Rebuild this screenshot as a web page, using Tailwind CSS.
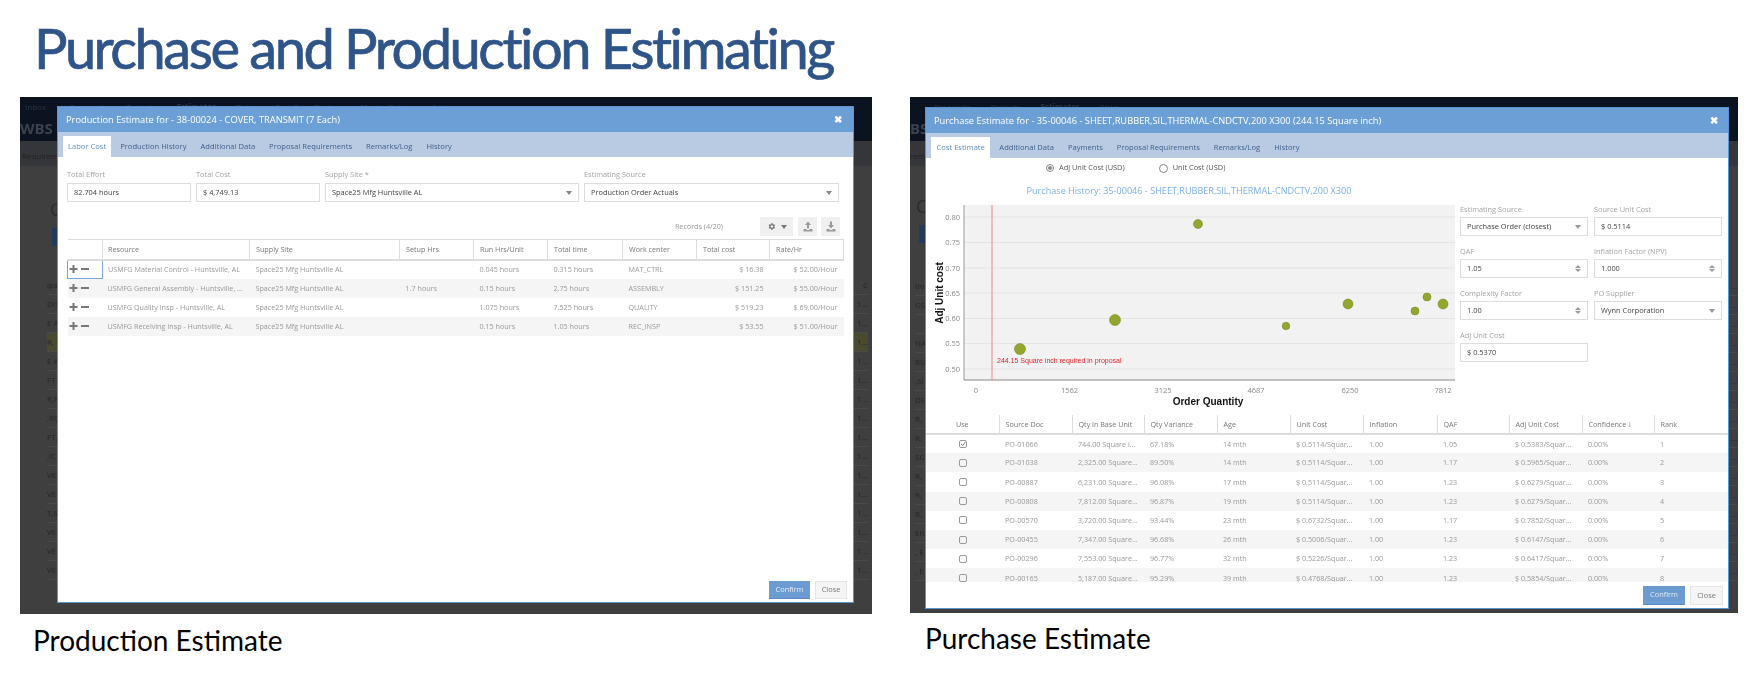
<!DOCTYPE html>
<html lang="en">
<head>
<meta charset="UTF-8" />
<title>Purchase and Production Estimating</title>
<script src="https://cdn.jsdelivr.net/npm/@tailwindcss/browser@4"></script>
</head>
<body class="bg-white font-['Open_Sans',sans-serif] overflow-hidden">
<div class="w-[1762px] h-[678px] overflow-hidden">

  <h1 class="h-[97px] pl-[34px] pt-[13px] font-['Lato',sans-serif] text-[56px] leading-[70px] text-[#2f5488] tracking-[-2.5px] [-webkit-text-stroke:0.7px_#2f5488]">Purchase and Production Estimating</h1>

  <div class="flex pl-[20px] gap-[38px]">

    <!-- Production estimate -->
    <div class="w-[852px]">
      <div class="relative h-[517px] bg-[#3f3f3f] overflow-hidden blur-[0.4px]">
        <div class="h-[44px] bg-[#0b1320] text-[#2a3444]">
          <div class="flex gap-[20px] pl-[5px] pt-[5px] text-[8px] leading-[10px]"><span>Inbox</span><span class="ml-[4px]">Proposals</span><span>Projects</span><span class="font-bold">Estimates</span><span>Risks</span><span>Cost-Price Review</span><span>Master Data ▾</span><span>Setup ▾</span></div>
          <div class="pl-0 pt-[7px] text-[15px] leading-[18px] font-bold text-[#3a4250]">WBS</div>
        </div>
        <div class="h-[25px] bg-[#35363a] pl-[2px] pt-[10px] text-[8px] leading-[10px] text-[#222]">Requirements</div>
        <div class="pl-[30px] pt-[33px] text-[18px] leading-[20px] text-[#2c2c2c]">C</div>
        <div class="ml-[32px] mt-[9px] w-[10px] h-[18px] bg-[#233a58]"></div>
        <div id="bgLeft" class="mt-[30px] pl-[27px] pr-[4px] text-[8px] text-[#262626]"></div>

        <div class="absolute left-[37px] top-[9px] w-[797px] h-[497px] bg-white border border-[#5b93d3] flex flex-col">
          <div class="h-[25px] shrink-0 bg-[#6c9fd6] flex items-center justify-between pl-[8px] pr-[11px] text-[9.3px] text-white">
            <span>Production Estimate for - 38-00024 - COVER, TRANSMIT (7 Each)</span>
            <span class="font-bold text-[10px]">✖</span>
          </div>
          <div class="h-[25px] shrink-0 bg-[#b9cbe3] flex items-end pl-[5px] gap-[4px] text-[7.6px] text-[#3f5f8c]">
            <span class="h-[21px] px-[5px] bg-white text-[#5f8fc6] flex items-center">Labor Cost</span>
            <span class="h-[21px] px-[5px] flex items-center">Production History</span>
            <span class="h-[21px] px-[5px] flex items-center">Additional Data</span>
            <span class="h-[21px] px-[5px] flex items-center">Proposal Requirements</span>
            <span class="h-[21px] px-[5px] flex items-center">Remarks/Log</span>
            <span class="h-[21px] px-[5px] flex items-center">History</span>
          </div>

          <div class="flex-1 pl-[9px] pr-[10px] pt-[11px] flex flex-col">
            <div class="flex gap-[5px] text-[7.4px]">
              <div class="w-[124px]"><div class="h-[15px] text-[#a3a3a3] leading-[13px]">Total Effort</div><div class="h-[19px] border border-[#ddd] px-[6px] flex items-center text-[#444]">82.704 hours</div></div>
              <div class="w-[124px]"><div class="h-[15px] text-[#a3a3a3] leading-[13px]">Total Cost</div><div class="h-[19px] border border-[#ddd] px-[6px] flex items-center text-[#444]">$ 4,749.13</div></div>
              <div class="w-[254px]"><div class="h-[15px] text-[#a3a3a3] leading-[13px]">Supply Site *</div><div class="h-[19px] border border-[#ddd] px-[6px] flex items-center justify-between text-[#444]"><span>Space25 Mfg Huntsville AL</span><span class="border-x-[3px] border-x-transparent border-t-[4px] border-t-[#888]"></span></div></div>
              <div class="w-[255px]"><div class="h-[15px] text-[#a3a3a3] leading-[13px]">Estimating Source</div><div class="h-[19px] border border-[#ddd] px-[6px] flex items-center justify-between text-[#444]"><span>Production Order Actuals</span><span class="border-x-[3px] border-x-transparent border-t-[4px] border-t-[#888]"></span></div></div>
            </div>

            <div class="mt-[15px] h-[19px] flex items-center justify-end pr-[3px] text-[7.2px] text-[#999]">
              <span class="mr-[37px]">Records (4/20)</span>
              <span class="w-[33px] h-[19px] bg-[#f0f0f0] flex items-center justify-center gap-[5px]">
                <svg width="9" height="9" viewBox="0 0 24 24" fill="#777"><path d="M19.4 13a7.5 7.5 0 0 0 0-2l2.1-1.6-2-3.5-2.5 1a7.5 7.5 0 0 0-1.7-1L15 3.200h-4l-.4 2.700a7.500 7.500 0 0 0-1.700 1l-2.500-1-2 3.500L6.500 11a7.500 7.500 0 0 0 0 2l-2.100 1.600 2 3.500 2.500-1a7.500 7.500 0 0 0 1.700 1l.4 2.700h4l.4-2.700a7.500 7.500 0 0 0 1.700-1l2.500 1 2-3.500zM13 15.500a3.500 3.500 0 1 1 0-7 3.500 3.500 0 0 1 0 7z"/></svg>
                <span class="border-x-[3px] border-x-transparent border-t-[4px] border-t-[#777]"></span>
              </span>
              <span class="ml-[5px] w-[19px] h-[19px] bg-[#f0f0f0] flex items-center justify-center">
                <svg width="10" height="11" viewBox="0 0 20 22" fill="#999"><path d="M10 1l6 7h-4v7H8V8H4z"/><path d="M1 16h6v2h6v-2h6v5H1z"/></svg>
              </span>
              <span class="ml-[4px] w-[19px] h-[19px] bg-[#f0f0f0] flex items-center justify-center">
                <svg width="10" height="11" viewBox="0 0 20 22" fill="#999"><path d="M8 1h4v7h4l-6 7-6-7h4z"/><path d="M1 16h6v2h6v-2h6v5H1z"/></svg>
              </span>
            </div>

            <table class="mt-[3px] w-[776px] table-fixed text-[7.2px]">
              <colgroup><col class="w-[35px]"><col class="w-[147px]"><col class="w-[150px]"><col class="w-[74px]"><col class="w-[74px]"><col class="w-[75px]"><col class="w-[74px]"><col class="w-[73px]"><col class="w-[74px]"></colgroup>
              <thead class="text-[#777] text-left">
                <tr class="h-[20px] border-t border-b-2 border-[#ddd]">
                  <th class="font-normal px-[6px]"></th>
                  <th class="font-normal px-[5px] border-l border-[#ddd]">Resource</th>
                  <th class="font-normal px-[6px] border-l border-[#ddd]">Supply Site</th>
                  <th class="font-normal px-[6px] border-l border-[#ddd]">Setup Hrs</th>
                  <th class="font-normal px-[6px] border-l border-[#ddd]">Run Hrs/Unit</th>
                  <th class="font-normal px-[6px] border-l border-[#ddd]">Total time</th>
                  <th class="font-normal px-[6px] border-l border-[#ddd]">Work center</th>
                  <th class="font-normal px-[6px] border-l border-[#ddd]">Total cost</th>
                  <th class="font-normal px-[6px] border-x border-[#ddd]">Rate/Hr</th>
                </tr>
              </thead>
              <tbody id="labor" class="text-[#999]"></tbody>
            </table>

            <div class="mt-auto mb-[3px] mr-[-4px] flex justify-end gap-[5px] text-[7.4px]">
              <span class="w-[41px] h-[18px] bg-[#6b9bd0] border-b border-[#5b8cc5] text-[#e8f0fa] flex items-center justify-center">Confirm</span>
              <span class="w-[32px] h-[18px] bg-[#f5f5f5] border border-[#e5e5e5] text-[#777] flex items-center justify-center">Close</span>
            </div>
          </div>
        </div>
      </div>
      <p class="mt-[9px] pl-[13px] font-['Lato',sans-serif] text-[28px] leading-[34px] text-black">Production Estimate</p>
    </div>

    <!-- Purchase estimate -->
    <div class="w-[828px]">
      <div class="relative h-[516px] bg-[#3f3f3f] overflow-hidden blur-[0.4px]">
        <div class="h-[44px] bg-[#0b1320] text-[#2a3444] overflow-hidden">
          <div class="flex gap-[20px] pl-[24px] pt-[5px] text-[8px] leading-[10px]"><span>Proposals</span><span>Projects</span><span class="font-bold">Estimates</span><span>Risks</span></div>
          <div class="pt-[7px] text-[15px] leading-[18px] font-bold text-[#3a4250]">BS</div>
        </div>
        <div class="h-[25px] bg-[#35363a] pt-[10px] text-[8px] leading-[10px] text-[#222]">rem</div>
        <div class="pl-[6px] pt-[30px] text-[18px] leading-[20px] text-[#2c2c2c]">C</div>
        <div class="ml-[9px] mt-[9px] w-[8px] h-[18px] bg-[#233a58]"></div>
        <div id="bgRight" class="mt-[34px] pl-[5px] pr-[1px] text-[8px] text-[#262626]"></div>

        <div class="absolute left-[15px] top-[10px] w-[804px] h-[502px] bg-white border border-[#5b93d3] flex flex-col">
          <div class="h-[25px] shrink-0 bg-[#6c9fd6] flex items-center justify-between pl-[8px] pr-[10px] text-[9.3px] text-white">
            <span>Purchase Estimate for - 35-00046 - SHEET,RUBBER,SIL,THERMAL-CNDCTV,200 X300 (244.15 Square inch)</span>
            <span class="font-bold text-[10px]">✖</span>
          </div>
          <div class="h-[25px] shrink-0 bg-[#b9cbe3] flex items-end pl-[5px] gap-[4px] text-[7.6px] text-[#3f5f8c]">
            <span class="h-[21px] px-[5.500px] bg-white text-[#5f8fc6] flex items-center">Cost Estimate</span>
            <span class="h-[21px] px-[5px] flex items-center">Additional Data</span>
            <span class="h-[21px] px-[5px] flex items-center">Payments</span>
            <span class="h-[21px] px-[5px] flex items-center">Proposal Requirements</span>
            <span class="h-[21px] px-[5px] flex items-center">Remarks/Log</span>
            <span class="h-[21px] px-[5px] flex items-center">History</span>
          </div>

          <div class="h-[20px] mb-[2px] shrink-0 flex items-center pl-[120px] text-[7.4px] text-[#555]">
            <span class="w-[8px] h-[8px] rounded-full border border-[#888] flex items-center justify-center"><span class="w-[4px] h-[4px] rounded-full bg-[#888]"></span></span>
            <span class="ml-[5px]">Adj Unit Cost (USD)</span>
            <span class="ml-[34px] w-[9px] h-[9px] rounded-full border border-[#888]"></span>
            <span class="ml-[5px]">Unit Cost (USD)</span>
          </div>

          <div class="flex shrink-0">
            <svg class="block" width="534" height="232" viewBox="0 0 534 232">
              <text x="263" y="14" text-anchor="middle" font-size="9.100" fill="#7cb0e8" font-family="Open Sans">Purchase History: 35-00046 - SHEET,RUBBER,SIL,THERMAL-CNDCTV,200 X300</text>
              <rect x="38" y="25" width="491" height="175" fill="#f2f2f2" />
              <g stroke="#e4e4e4" stroke-width="1">
                <line x1="38" x2="529" y1="37" y2="37" /><line x1="38" x2="529" y1="62.500" y2="62.500" /><line x1="38" x2="529" y1="88" y2="88" /><line x1="38" x2="529" y1="113" y2="113" /><line x1="38" x2="529" y1="138.500" y2="138.500" /><line x1="38" x2="529" y1="163.500" y2="163.500" /><line x1="38" x2="529" y1="189" y2="189" />
              </g>
              <line x1="38" x2="38" y1="25" y2="200" stroke="#999" />
              <line x1="38" x2="529" y1="200" y2="200" stroke="#888" />
              <line x1="66" x2="66" y1="25" y2="200" stroke="#e88" stroke-width="1" />
              <text x="71" y="183" font-size="7" fill="#e8202a" font-family="Liberation Sans">244.15 Square inch required in proposal</text>
              <g font-size="7.500" fill="#888" font-family="Open Sans" text-anchor="end">
                <text x="34" y="40">0.80</text><text x="34" y="65">0.75</text><text x="34" y="91">0.70</text><text x="34" y="116">0.65</text><text x="34" y="141">0.60</text><text x="34" y="166">0.55</text><text x="34" y="192">0.50</text>
              </g>
              <g font-size="7.500" fill="#888" font-family="Open Sans" text-anchor="middle">
                <text x="50" y="213">0</text><text x="143.500" y="213">1562</text><text x="237" y="213">3125</text><text x="330" y="213">4687</text><text x="424" y="213">6250</text><text x="517" y="213">7812</text>
              </g>
              <text x="17" y="113" transform="rotate(-90 17 113)" text-anchor="middle" font-size="10" font-weight="700" fill="#111" font-family="Liberation Sans">Adj Unit cost</text>
              <text x="282" y="225" text-anchor="middle" font-size="10" font-weight="700" fill="#111" font-family="Liberation Sans">Order Quantity</text>
              <g fill="#95a62c" stroke="#6f7d1f" stroke-width="0.500">
                <circle cx="272" cy="44" r="4.500" /><circle cx="189" cy="140" r="5.500" /><circle cx="94" cy="169" r="5.500" /><circle cx="360" cy="146" r="3.800" /><circle cx="422" cy="124" r="5" /><circle cx="489" cy="131" r="4" /><circle cx="501" cy="117" r="4" /><circle cx="517" cy="124" r="5" />
              </g>
            </svg>

            <div class="mt-[23px] grid grid-cols-[128px_128px] gap-x-[6px] gap-y-[9px] content-start text-[7.4px]">
              <div><div class="h-[14px] text-[#a3a3a3] leading-[12px]">Estimating Source</div><div class="h-[19px] border border-[#ddd] px-[6px] flex items-center justify-between text-[#444]"><span>Purchase Order (closest)</span><span class="border-x-[3px] border-x-transparent border-t-[4px] border-t-[#999]"></span></div></div>
              <div><div class="h-[14px] text-[#a3a3a3] leading-[12px]">Source Unit Cost</div><div class="h-[19px] border border-[#ddd] px-[6px] flex items-center text-[#444]">$ 0.5114</div></div>
              <div><div class="h-[14px] text-[#a3a3a3] leading-[12px]">QAF</div><div class="h-[19px] border border-[#ddd] px-[6px] flex items-center justify-between text-[#444]"><span>1.05</span><span class="flex flex-col gap-[1px]"><span class="border-x-[3px] border-x-transparent border-b-[3px] border-b-[#999]"></span><span class="border-x-[3px] border-x-transparent border-t-[3px] border-t-[#999]"></span></span></div></div>
              <div><div class="h-[14px] text-[#a3a3a3] leading-[12px]">Inflation Factor (NPV)</div><div class="h-[19px] border border-[#ddd] px-[6px] flex items-center justify-between text-[#444]"><span>1.000</span><span class="flex flex-col gap-[1px]"><span class="border-x-[3px] border-x-transparent border-b-[3px] border-b-[#999]"></span><span class="border-x-[3px] border-x-transparent border-t-[3px] border-t-[#999]"></span></span></div></div>
              <div><div class="h-[14px] text-[#a3a3a3] leading-[12px]">Complexity Factor</div><div class="h-[19px] border border-[#ddd] px-[6px] flex items-center justify-between text-[#444]"><span>1.00</span><span class="flex flex-col gap-[1px]"><span class="border-x-[3px] border-x-transparent border-b-[3px] border-b-[#999]"></span><span class="border-x-[3px] border-x-transparent border-t-[3px] border-t-[#999]"></span></span></div></div>
              <div><div class="h-[14px] text-[#a3a3a3] leading-[12px]">PO Supplier</div><div class="h-[19px] border border-[#ddd] px-[6px] flex items-center justify-between text-[#444]"><span>Wynn Corporation</span><span class="border-x-[3px] border-x-transparent border-t-[4px] border-t-[#999]"></span></div></div>
              <div><div class="h-[14px] text-[#a3a3a3] leading-[12px]">Adj Unit Cost</div><div class="h-[19px] border border-[#ddd] px-[6px] flex items-center text-[#444]">$ 0.5370</div></div>
            </div>
          </div>

          <div class="mt-[3px] h-[167px] shrink-0 overflow-hidden">
            <table class="w-[802px] table-fixed text-[7.2px]">
              <colgroup><col class="w-[73px]"><col class="w-[73px]"><col class="w-[72px]"><col class="w-[73px]"><col class="w-[73px]"><col class="w-[73px]"><col class="w-[74px]"><col class="w-[72px]"><col class="w-[73px]"><col class="w-[72px]"><col class="w-[74px]"></colgroup>
              <thead class="text-[#777] text-left">
                <tr class="h-[19px] border-b-2 border-[#ddd]">
                  <th class="font-normal text-center">Use</th>
                  <th class="font-normal px-[6px] border-l border-[#ddd]">Source Doc</th>
                  <th class="font-normal px-[6px] border-l border-[#ddd]">Qty in Base Unit</th>
                  <th class="font-normal px-[6px] border-l border-[#ddd]">Qty Variance</th>
                  <th class="font-normal px-[6px] border-l border-[#ddd]">Age</th>
                  <th class="font-normal px-[6px] border-l border-[#ddd]">Unit Cost</th>
                  <th class="font-normal px-[6px] border-l border-[#ddd]">Inflation</th>
                  <th class="font-normal px-[6px] border-l border-[#ddd]">QAF</th>
                  <th class="font-normal px-[6px] border-l border-[#ddd]">Adj Unit Cost</th>
                  <th class="font-normal px-[6px] border-l border-[#ddd]">Confidence <span class="text-[#aaa]">⭣</span></th>
                  <th class="font-normal px-[6px] border-l border-[#ddd]">Rank</th>
                </tr>
              </thead>
              <tbody id="history" class="text-[#999]"></tbody>
            </table>
          </div>

          <div class="mt-[4px] pr-[5px] flex justify-end gap-[5px] text-[7.4px]">
            <span class="w-[42px] h-[19px] bg-[#6b9bd0] border-b border-[#5b8cc5] text-[#dfe9f6] flex items-center justify-center">Confirm</span>
            <span class="w-[33px] h-[19px] bg-[#f5f5f5] border border-[#e5e5e5] text-[#777] flex items-center justify-center">Close</span>
          </div>
        </div>
      </div>
      <p class="mt-[8px] pl-[15px] font-['Lato',sans-serif] text-[28px] leading-[34px] text-black">Purchase Estimate</p>
    </div>
  </div>
</div>

<script>
  const plusMinus = '<svg width="21" height="10" viewBox="0 0 21 10" fill="#777"><path d="M3.500 1h2v3h3v2h-3v3h-2V6h-3V4h3z"/><path d="M12 4h8v2h-8z"/></svg>';
  const labor = [
    ['USMFG Material Control - Huntsville, AL', '', '0.045 hours', '0.315 hours', 'MAT_CTRL', '$ 16.38', '$ 52.00/Hour'],
    ['USMFG General Assembly - Huntsville, ...', '1.7 hours', '0.15 hours', '2.75 hours', 'ASSEMBLY', '$ 151.25', '$ 55.00/Hour'],
    ['USMFG Quality Insp - Huntsville, AL', '', '1.075 hours', '7.525 hours', 'QUALITY', '$ 519.23', '$ 69.00/Hour'],
    ['USMFG Receiving Insp - Huntsville, AL', '', '0.15 hours', '1.05 hours', 'REC_INSP', '$ 53.55', '$ 51.00/Hour']
  ];
  document.getElementById('labor').innerHTML = labor.map((r, i) => `
    <tr class="h-[19px] ${i % 2 ? 'bg-[#f5f5f5]' : ''}">
      <td class="pl-[1px] ${i === 0 ? 'border border-[#7aa7da]' : ''}">${plusMinus}</td>
      <td class="px-[5px] whitespace-nowrap overflow-hidden">${r[0]}</td>
      <td class="px-[6px]">Space25 Mfg Huntsville AL</td>
      <td class="px-[6px]">${r[1]}</td>
      <td class="px-[6px]">${r[2]}</td>
      <td class="px-[6px]">${r[3]}</td>
      <td class="px-[6px]">${r[4]}</td>
      <td class="px-[6px] text-right">${r[5]}</td>
      <td class="px-[6px] text-right">${r[6]}</td>
    </tr>`).join('');

  const history = [
    ['PO-01066', '744.00 Square i...', '67.18%', '14 mth', '$ 0.5114/Squar...', '1.05', '$ 0.5383/Squar...'],
    ['PO-01038', '2,325.00 Square...', '89.50%', '14 mth', '$ 0.5114/Squar...', '1.17', '$ 0.5965/Squar...'],
    ['PO-00887', '6,231.00 Square...', '96.08%', '17 mth', '$ 0.5114/Squar...', '1.23', '$ 0.6279/Squar...'],
    ['PO-00808', '7,812.00 Square...', '96.87%', '19 mth', '$ 0.5114/Squar...', '1.23', '$ 0.6279/Squar...'],
    ['PO-00570', '3,720.00 Square...', '93.44%', '23 mth', '$ 0.6732/Squar...', '1.17', '$ 0.7852/Squar...'],
    ['PO-00455', '7,347.00 Square...', '96.68%', '26 mth', '$ 0.5006/Squar...', '1.23', '$ 0.6147/Squar...'],
    ['PO-00296', '7,553.00 Square...', '96.77%', '32 mth', '$ 0.5226/Squar...', '1.23', '$ 0.6417/Squar...'],
    ['PO-00165', '5,187.00 Square...', '95.29%', '39 mth', '$ 0.4768/Squar...', '1.23', '$ 0.5854/Squar...']
  ];
  document.getElementById('history').innerHTML = history.map((r, i) => `
    <tr class="h-[19.200px] ${i % 2 ? 'bg-[#f5f5f5]' : ''}">
      <td><span class="mx-auto w-[8px] h-[8px] rounded-[2px] border border-[#999] flex items-center justify-center">${i === 0 ? '<svg width="8" height="8" viewBox="0 0 8 8" fill="none" stroke="#777" stroke-width="1.300"><path d="M1.500 4l2 2 3.500-4.500"/></svg>' : ''}</span></td>
      <td class="px-[6px]">${r[0]}</td>
      <td class="px-[6px]">${r[1]}</td>
      <td class="px-[6px]">${r[2]}</td>
      <td class="px-[6px]">${r[3]}</td>
      <td class="px-[6px]">${r[4]}</td>
      <td class="px-[6px]">1.00</td>
      <td class="px-[6px]">${r[5]}</td>
      <td class="px-[6px]">${r[6]}</td>
      <td class="px-[6px]">0.00%</td>
      <td class="px-[6px]">${i + 1}</td>
    </tr>`).join('');

  // dimmed rows of the page behind the dialogs
  const behindLeft = ['ips', 'DIS', 'E A', 'R,', 'E A', 'FT', 'R,N', ',RO', 'FT,', ',IC', 'VE', 'VE', 'T,S', 'VE', 'VE', 'VE'];
  document.getElementById('bgLeft').innerHTML = behindLeft.map((t, i) => `
    <div class="h-[19px] flex items-center justify-between border-b border-[#4a4a4a] ${i === 3 ? 'bg-[#4a4a30]' : ''}"><span>${t}</span><span>${i === 0 ? 'C' : '1...'}</span></div>`).join('');
  const behindRight = ['tio', 'GS', '', 'NA', 'RUF', ',SI', 'DE', 'R,', 'R,', 'SC', 'R,', 'R,', 'R,', 'ER', ', E', ', E'];
  document.getElementById('bgRight').innerHTML = behindRight.map((t, i) => `
    <div class="h-[19px] flex items-center justify-between border-b border-[#4a4a4a]"><span>${t}</span><span>1...</span></div>`).join('');
</script>
</body>
</html>
